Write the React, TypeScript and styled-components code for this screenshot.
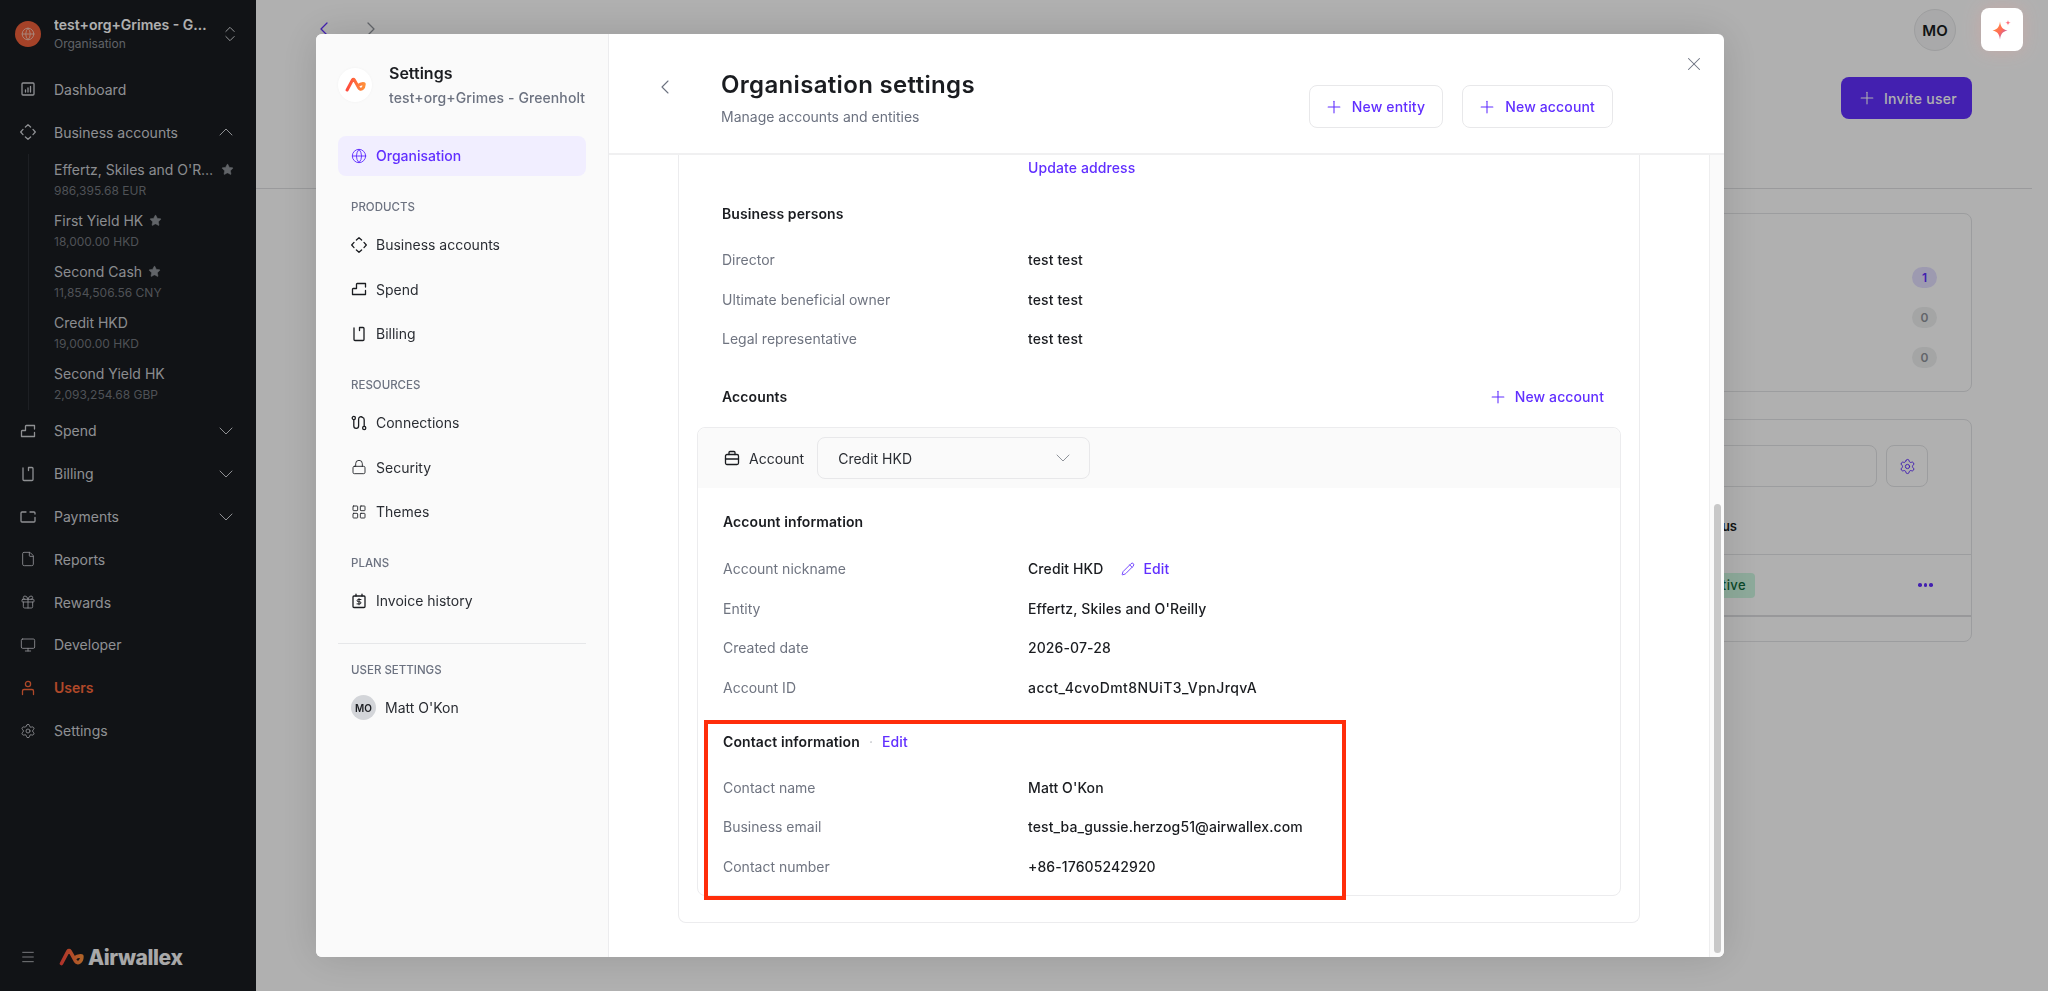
import React from 'react';
import styled, { createGlobalStyle } from 'styled-components';
import {
	ChevronDown,
	ChevronLeft,
	ChevronRight,
	ChevronUp,
	ChevronsUpDown,
	Gift,
	Globe,
	LayoutGrid,
	Lock,
	Menu,
	Monitor,
	Pencil,
	Plus,
	Settings as SettingsIcon,
	Star,
	X,
	File,
} from 'lucide-react';

const FONT = `Inter, 'Noto Sans', 'Liberation Sans', sans-serif`;
const PURPLE = '#612fff';

const GlobalStyle = createGlobalStyle`
	html, body {
		margin: 0;
		padding: 0;
		height: 100%;
		overflow: hidden;
		background: #fff;
		font-family: ${FONT};
	}
	* {
		box-sizing: border-box;
	}
`;

const Page = styled.div`
	display: flex;
	height: 100vh;
	overflow: hidden;
	background: #fff;
`;

/* ---------- sidebar ---------- */

const Sidebar = styled.aside`
	width: 256px;
	flex-shrink: 0;
	display: flex;
	flex-direction: column;
	background: #191c20;
	color: #ccced3;
	font-size: 14px;
`;

const OrgBlock = styled.div`
	height: 68px;
	display: flex;
	align-items: center;
	padding: 0 20px 0 15px;
`;

const OrgAvatar = styled.div`
	width: 26px;
	height: 26px;
	border-radius: 50%;
	background: #f0603a;
	color: #f6c9ba;
	display: flex;
	align-items: center;
	justify-content: center;
	flex-shrink: 0;
`;

const OrgText = styled.div`
	margin-left: 13px;
	width: 156px;
	flex-shrink: 0;
`;

const OrgName = styled.div`
	color: #fff;
	font-weight: 600;
	line-height: 18px;
	white-space: nowrap;
	overflow: hidden;
	text-overflow: ellipsis;
`;

const OrgSub = styled.div`
	color: #8b8f96;
	font-size: 12px;
	line-height: 18px;
	margin-top: 1px;
`;

const OrgSwitch = styled.div`
	margin-left: 10px;
	display: flex;
	color: #d6d8dc;
`;

const NavRow = styled.div<{ $active?: boolean }>`
	height: 42.8px;
	display: flex;
	align-items: center;
	padding: 0 18px 0 20px;
	gap: 18px;
	flex-shrink: 0;
	color: ${(p) => (p.$active ? '#ff6a3c' : '#cfd1d6')};
	font-weight: ${(p) => (p.$active ? 600 : 400)};

	svg {
		flex-shrink: 0;
	}
`;

const NavText = styled.span`
	flex: 1;
`;

const SubGroup = styled.div`
	margin: 0 0 0 28px;
	border-left: 1px solid #2b2e33;
	padding-left: 25px;
`;

const SubItem = styled.div`
	height: 51.2px;
	padding-top: 6px;
`;

const SubName = styled.div`
	display: flex;
	align-items: center;
	gap: 6px;
	line-height: 20px;
	color: #c9cbd0;

	svg {
		flex-shrink: 0;
		fill: #8d9197;
		color: #8d9197;
	}
`;

const SubLabel = styled.span<{ $wide?: boolean }>`
	white-space: nowrap;
	overflow: hidden;
	text-overflow: ellipsis;
	max-width: ${(p) => (p.$wide ? '161px' : 'none')};
`;

const SubAmount = styled.div`
	margin-top: 2px;
	font-size: 12px;
	line-height: 18px;
	color: #73777e;
`;

const SidebarFoot = styled.div`
	margin-top: auto;
	height: 68px;
	display: flex;
	align-items: center;
	padding-left: 20px;
	color: #c5c7cc;
`;

const Brand = styled.div`
	display: flex;
	align-items: center;
	margin-left: 23px;
	gap: 4px;
`;

const BrandText = styled.span`
	font-size: 21px;
	font-weight: 800;
	letter-spacing: -0.4px;
	color: #f4f4f5;
`;

/* ---------- page behind the dialog ---------- */

const Main = styled.main`
	flex: 1;
	display: flex;
	flex-direction: column;
	min-width: 0;
`;

const TopBar = styled.div`
	height: 60px;
	display: flex;
	align-items: center;
	padding: 0 92px 0 56px;
`;

const ArrowBack = styled.div`
	color: ${PURPLE};
	display: flex;
	margin-right: 23px;
	margin-top: -2px;
`;

const ArrowForward = styled.div`
	color: #8f939a;
	display: flex;
	margin-top: -2px;
`;

const UserBadge = styled.div`
	margin-left: auto;
	width: 42px;
	height: 42px;
	border-radius: 50%;
	border: 1px solid #e4e5e7;
	background: #f5f5f6;
	color: #191c20;
	font-weight: 600;
	font-size: 15px;
	display: flex;
	align-items: center;
	justify-content: center;
`;

const ActionBar = styled.div`
	display: flex;
	justify-content: flex-end;
	padding: 17px 76px 0 0;
`;

const InviteButton = styled.div`
	width: 131px;
	height: 42px;
	border-radius: 8px;
	background: ${PURPLE};
	color: #fff;
	font-size: 14px;
	font-weight: 500;
	letter-spacing: 0.3px;
	display: flex;
	align-items: center;
	gap: 7px;
	padding-left: 16px;
`;

const Divider = styled.div`
	height: 1px;
	margin: 69px 16px 0 0;
	background: #dfe0e2;
`;

const Cards = styled.div`
	display: flex;
	flex-direction: column;
	gap: 27px;
	padding: 24px 76px 0 100px;
`;

const Card = styled.section<{ $height: number }>`
	height: ${(p) => p.$height}px;
	border: 1px solid #e3e4e6;
	border-radius: 8px;
`;

const CountList = styled.div`
	display: flex;
	flex-direction: column;
	align-items: flex-end;
	gap: 19px;
	padding: 53px 34px 0 0;
`;

const Count = styled.div<{ $on?: boolean }>`
	width: 25px;
	height: 21px;
	border-radius: 11px;
	background: ${(p) => (p.$on ? '#e4dfff' : '#eeeff0')};
	color: ${(p) => (p.$on ? PURPLE : '#8f939a')};
	font-size: 12px;
	font-weight: 600;
	display: flex;
	align-items: center;
	justify-content: center;
`;

const Toolbar = styled.div`
	display: flex;
	justify-content: flex-end;
	gap: 9px;
	padding: 25px 43px 0 0;
`;

const SearchField = styled.div`
	width: 800px;
	height: 42px;
	border: 1px solid #e3e4e6;
	border-radius: 8px;
`;

const GearButton = styled.div`
	width: 42px;
	height: 42px;
	border: 1px solid #e3e4e6;
	border-radius: 8px;
	color: ${PURPLE};
	display: flex;
	align-items: center;
	justify-content: center;
`;

const TableHead = styled.div`
	height: 68px;
	display: flex;
	justify-content: flex-end;
	align-items: flex-end;
	padding: 0 234px 20px 0;
	border-bottom: 1px solid #e3e4e6;
	font-size: 13px;
	font-weight: 600;
	color: #191c20;
`;

const TableRow = styled.div`
	height: 62px;
	display: flex;
	justify-content: flex-end;
	align-items: center;
	gap: 163px;
	padding: 0 38px 0 0;
	border-bottom: 2px solid #dcdde0;
`;

const StatusPill = styled.div`
	height: 25px;
	border-radius: 4px;
	background: #cdf7e0;
	color: #0f6a3b;
	font-size: 13px;
	font-weight: 500;
	letter-spacing: 0.4px;
	line-height: 25px;
	padding: 0 9px 0 20px;
`;

const Dots = styled.div`
	display: flex;
	gap: 2px;
	width: 15px;
`;

const Dot = styled.i`
	width: 3.5px;
	height: 3.5px;
	border-radius: 50%;
	background: ${PURPLE};
`;

const Backdrop = styled.div`
	position: fixed;
	inset: 0;
	background: rgba(0, 0, 0, 0.31);
`;

const AiButton = styled.div`
	position: fixed;
	top: 8px;
	left: 1981px;
	width: 42px;
	height: 43px;
	border-radius: 8px;
	background: #fff;
	box-shadow: 0 0 18px rgba(255, 150, 140, 0.28);
	display: flex;
	align-items: center;
	justify-content: center;
`;

/* ---------- dialog ---------- */

const Dialog = styled.div`
	position: fixed;
	left: 316px;
	top: 34px;
	width: 1408px;
	height: 923px;
	display: flex;
	border-radius: 6px;
	overflow: hidden;
	background: #fff;
	box-shadow: 0 0 40px rgba(0, 0, 0, 0.14);
	color: #1a1c20;
	font-size: 14px;
`;

const SettingsPane = styled.div`
	width: 293px;
	flex-shrink: 0;
	background: #fafafa;
	border-right: 1px solid #ececee;
	padding: 28px 22px 0;
`;

const PaneHead = styled.div`
	display: flex;
	align-items: center;
	gap: 17px;
	margin-bottom: 27.5px;
`;

const LogoDisc = styled.div`
	width: 34px;
	height: 34px;
	border-radius: 50%;
	background: #fff;
	box-shadow: 0 0 3px rgba(0, 0, 0, 0.04);
	flex-shrink: 0;
	display: flex;
	align-items: center;
	justify-content: center;
`;

const PaneTitle = styled.div`
	font-size: 16px;
	font-weight: 600;
	line-height: 22px;
	margin-bottom: 4px;
`;

const PaneSub = styled.div`
	font-weight: 500;
	line-height: 20px;
	color: #6c7280;
	white-space: nowrap;
	letter-spacing: 0.1px;
`;

const MenuLabel = styled.div`
	margin: 23px 0 10px 13px;
	font-size: 11.5px;
	font-weight: 500;
	line-height: 16px;
	color: #6c7280;
	text-transform: uppercase;
`;

const MenuGroup = styled.div`
	display: flex;
	flex-direction: column;
	gap: 4.5px;
`;

const MenuItem = styled.div<{ $active?: boolean }>`
	height: 40px;
	display: flex;
	align-items: center;
	gap: 9px;
	padding-left: 13px;
	border-radius: 8px;
	background: ${(p) => (p.$active ? '#f1eeff' : 'transparent')};
	color: ${(p) => (p.$active ? PURPLE : '#2a2d33')};
	font-weight: ${(p) => (p.$active ? 500 : 400)};

	svg {
		flex-shrink: 0;
		color: ${(p) => (p.$active ? PURPLE : '#1a1c20')};
	}
`;

const PaneRule = styled.div`
	height: 1px;
	margin-top: 22px;
	background: #e6e7e9;
`;

const RuleLabel = styled(MenuLabel)`
	margin-top: 18px;
`;

const UserDisc = styled.div`
	width: 25px;
	height: 25px;
	border-radius: 50%;
	background: #d3d5d9;
	color: #1a1c20;
	font-size: 10px;
	font-weight: 600;
	display: flex;
	align-items: center;
	justify-content: center;
`;

const Detail = styled.div`
	flex: 1;
	min-width: 0;
	display: flex;
	flex-direction: column;
`;

const DetailHead = styled.header`
	position: relative;
	height: 121px;
	flex-shrink: 0;
	display: flex;
	border-bottom: 2px solid #f0f0f1;
	padding: 35px 111px 0 44px;
`;

const BackArrow = styled.div`
	color: #6c7280;
	display: flex;
	height: 24px;
	margin-top: 6px;
	margin-right: 44px;
`;

const HeadTitle = styled.h1`
	margin: 0;
	font-size: 24px;
	font-weight: 600;
	line-height: 32px;
	letter-spacing: 0.33px;
`;

const HeadSub = styled.div`
	margin-top: 6px;
	line-height: 20px;
	color: #6c7280;
`;

const HeadActions = styled.div`
	margin-left: auto;
	display: flex;
	gap: 19px;
	padding-top: 16px;
`;

const OutlineButton = styled.div`
	height: 43px;
	display: flex;
	align-items: center;
	gap: 8px;
	padding: 0 17px 0 14px;
	border: 1px solid #e8e8ea;
	border-radius: 8px;
	color: ${PURPLE};
	font-weight: 500;
	letter-spacing: 0.15px;
`;

const CloseButton = styled.div`
	position: absolute;
	top: 19px;
	right: 19px;
	display: flex;
	color: #6c7280;
`;

const DetailBody = styled.div`
	flex: 1;
	min-height: 0;
	display: flex;
`;

const ScrollArea = styled.div`
	flex: 1;
	min-width: 0;
	padding: 0 69px;
	overflow: hidden;
`;

const OuterCard = styled.div`
	height: 768px;
	border: 1px solid #ececee;
	border-top: none;
	border-radius: 0 0 8px 8px;
	padding: 3px 18px 27px 18px;
`;

const Indented = styled.div`
	padding-left: 25px;
`;

const AddressLink = styled.div`
	padding-left: 306px;
	line-height: 20px;
	color: ${PURPLE};
	font-weight: 500;
	letter-spacing: 0.1px;
`;

const SectionTitle = styled.div<{ $top?: number; $bottom?: number }>`
	margin-top: ${(p) => p.$top ?? 25}px;
	margin-bottom: ${(p) => p.$bottom ?? 17}px;
	line-height: 20px;
	font-weight: 600;
	display: flex;
	align-items: center;
	letter-spacing: 0.1px;
`;

const InfoRow = styled.div<{ $col?: number }>`
	display: grid;
	grid-template-columns: ${(p) => p.$col ?? 306}px 1fr;
	height: 39.4px;
	align-items: center;
`;

const InfoLabel = styled.div`
	color: #6f7480;
`;

const InfoValue = styled.div`
	font-weight: 500;
	display: flex;
	align-items: center;
	letter-spacing: 0.1px;
`;

const AccountIdValue = styled(InfoValue)`
	letter-spacing: 0.43px;
`;

const AccountsHead = styled(SectionTitle)`
	justify-content: space-between;
	padding-right: 17px;
`;

const TextLink = styled.span`
	display: inline-flex;
	align-items: center;
	gap: 7px;
	color: ${PURPLE};
	font-weight: 500;
	letter-spacing: 0.1px;
`;

const EditLink = styled(TextLink)`
	gap: 8px;
	margin-left: 18px;
`;

const AccountCard = styled.div`
	border: 1px solid #ececee;
	border-radius: 8px;
	overflow: visible;
	height: 469px;
`;

const AccountBar = styled.div`
	height: 60px;
	background: #fafafa;
	border-radius: 8px 8px 0 0;
	display: flex;
	align-items: center;
	padding-left: 26px;
	gap: 9px;
	color: #2a2d33;

	svg {
		color: #1a1c20;
	}
`;

const SelectBox = styled.div`
	width: 273px;
	height: 42px;
	margin-left: 4px;
	border: 1px solid #e8e8ea;
	border-radius: 8px;
	display: flex;
	align-items: center;
	justify-content: space-between;
	padding: 0 14px 0 20px;

	svg {
		color: #8f939a;
	}
`;

const AccountBody = styled.div`
	padding: 0 25px;
`;

const ContactSection = styled.div`
	position: relative;
	margin-top: 25px;
`;

const ContactTitle = styled(SectionTitle)`
	margin-top: 0;
	margin-bottom: 16px;
`;

const Sep = styled.span`
	margin: 0 9px 0 9px;
	color: #c4c6cb;
	font-weight: 400;
`;

const Annotation = styled.div`
	position: absolute;
	left: -19px;
	top: -12px;
	bottom: -14px;
	width: 642px;
	border: 4px solid #ff2d0a;
	pointer-events: none;
`;

const ScrollTrack = styled.div`
	width: 15px;
	flex-shrink: 0;
	background: #fafafa;
	border-left: 1px solid #eeeeef;
	padding: 349px 3px 0 4px;
`;

const ScrollThumb = styled.div`
	height: 449px;
	border-radius: 4px;
	background: #c8c8c8;
`;

/* ---------- drawn icons ---------- */

const Svg = ({ size = 16, children }: { size?: number; children: React.ReactNode }) => (
	<svg
		width={size}
		height={size}
		viewBox='0 0 16 16'
		fill='none'
		stroke='currentColor'
		strokeWidth={1.3}
		strokeLinecap='round'
		strokeLinejoin='round'
	>
		{children}
	</svg>
);

const DiamondIcon = () => (
	<Svg>
		<path d='M5.400 3 8 .7 10.600 3M13 5.400 15.300 8 13 10.600M10.600 13 8 15.300 5.400 13M3 10.600.7 8 3 5.400' />
	</Svg>
);

const SpendIcon = () => (
	<Svg>
		<path d='M1.500 13.500V8.200a.7.700 0 0 1 .7-.7H5.500V3.200a.7.700 0 0 1 .7-.7h8.300V6M14.500 9.500v4H1.500' />
	</Svg>
);

const BillingIcon = () => (
	<Svg>
		<path d='M3 2v11.500a1 1 0 0 0 1 1h8a1 1 0 0 0 1-1V2.500a1 1 0 0 0-1-1H8.500v3' />
	</Svg>
);

const PaymentsIcon = () => (
	<Svg>
		<path d='M6 3H2a1 1 0 0 0-1 1v8a1 1 0 0 0 1 1h12a1 1 0 0 0 1-1V8.500M10 3h4a1 1 0 0 1 1 1v1' />
	</Svg>
);

const UserIcon = () => (
	<Svg>
		<circle cx='8' cy='4' r='2.600' />
		<path d='M2.500 14.500V11a1.500 1.500 0 0 1 1.500-1.500h8a1.500 1.500 0 0 1 1.500 1.500v3.500' />
	</Svg>
);

const ConnectionsIcon = () => (
	<Svg>
		<circle cx='2.800' cy='3' r='1.600' />
		<circle cx='13.200' cy='13' r='1.600' />
		<path d='M2.800 4.600V11a2.400 2.400 0 0 0 4.800 0V4a2.400 2.400 0 0 1 4 -1.600M11.400 2.400a2.400 2.400 0 0 1 1.800 2.300v6.700' />
	</Svg>
);

const InvoiceIcon = () => (
	<Svg>
		<rect x='2' y='3' width='12' height='11.500' rx='1' />
		<path d='M5 1.200V3M11 1.200V3' />
		<path d='M10 6.500H7.200a1 1 0 0 0 0 2.200h1.600a1 1 0 0 1 0 2.200H6M8 5.600v6.200' strokeWidth={1} />
	</Svg>
);

const BriefcaseIcon = () => (
	<Svg>
		<rect x='1.500' y='4.500' width='13' height='10' rx='1.500' />
		<path d='M5 4.500V2.500a1 1 0 0 1 1-1h4a1 1 0 0 1 1 1v2M1.500 9h13' />
	</Svg>
);

const AirwallexMark = ({ size }: { size: number }) => (
	<svg width={size} height={(size * 18) / 25} viewBox='0 0 25 18' fill='none'>
		<defs>
			<linearGradient id={`ax-${size}`} x1='0' y1='0' x2='1' y2='0'>
				<stop offset='0' stopColor='#ff4b3e' />
				<stop offset='1' stopColor='#ff8f3a' />
			</linearGradient>
		</defs>
		<path
			d='M2.500 15.500 9 3.200C9.500 2.400 10.500 2.400 11 3.200L16.500 13C17.500 14.800 19 15 20.500 14 22.500 12.500 23 10 22.800 8 20 7.500 17.500 8.500 15 10.500'
			stroke={`url(#ax-${size})`}
			strokeWidth={3.6}
			strokeLinecap='round'
			strokeLinejoin='round'
		/>
	</svg>
);

const Sparkle = () => (
	<svg width='24' height='24' viewBox='0 0 24 24'>
		<defs>
			<linearGradient id='spark' x1='0' y1='0' x2='1' y2='1'>
				<stop offset='0' stopColor='#ff9a2e' />
				<stop offset='0.55' stopColor='#ff6a5a' />
				<stop offset='1' stopColor='#7a5cff' />
			</linearGradient>
		</defs>
		<path d='M10 3.500C10.800 9 12 11 17.500 12.500 12 14 10.800 16 10 21.500 9.200 16 8 14 2.500 12.500 8 11 9.200 9 10 3.500Z' fill='url(#spark)' />
		<path d='M18 2c.3 2 .8 2.500 2.800 2.800-2 .3-2.500.8-2.800 2.800-.3-2-.8-2.500-2.800-2.800 2-.3 2.500-.8 2.800-2.800Z' fill='#ff6f7d' />
	</svg>
);

const accounts = [
	{ name: "Effertz, Skiles and O'Reilly", amount: '986,395.68 EUR', starred: true, wide: true },
	{ name: 'First Yield HK', amount: '18,000.00 HKD', starred: true },
	{ name: 'Second Cash', amount: '11,854,506.56 CNY', starred: true },
	{ name: 'Credit HKD', amount: '19,000.00 HKD' },
	{ name: 'Second Yield HK', amount: '2,093,254.68 GBP' },
];

const S = 16;
const ST = 1.3;

export default function App() {
	return (
		<>
			<GlobalStyle />
			<Page>
				<Sidebar>
					<OrgBlock>
						<OrgAvatar>
							<Globe size={14} strokeWidth={1.5} />
						</OrgAvatar>
						<OrgText>
							<OrgName>test+org+Grimes - Greenholt</OrgName>
							<OrgSub>Organisation</OrgSub>
						</OrgText>
						<OrgSwitch>
							<ChevronsUpDown size={20} strokeWidth={1.2} />
						</OrgSwitch>
					</OrgBlock>
					<NavRow>
						<Svg>
							<rect x='2' y='2' width='12' height='12' rx='1' />
							<path d='M5.500 11V9M8 11V7M10.500 11V5.500' />
						</Svg>
						<NavText>Dashboard</NavText>
					</NavRow>
					<NavRow>
						<DiamondIcon />
						<NavText>Business accounts</NavText>
						<ChevronUp size={24} strokeWidth={1} />
					</NavRow>
					<SubGroup>
						{accounts.map((a) => (
							<SubItem key={a.name}>
								<SubName>
									<SubLabel $wide={a.wide}>{a.name}</SubLabel>
									{a.starred && <Star size={13} strokeWidth={1} />}
								</SubName>
								<SubAmount>{a.amount}</SubAmount>
							</SubItem>
						))}
					</SubGroup>
					<NavRow>
						<SpendIcon />
						<NavText>Spend</NavText>
						<ChevronDown size={24} strokeWidth={1} />
					</NavRow>
					<NavRow>
						<BillingIcon />
						<NavText>Billing</NavText>
						<ChevronDown size={24} strokeWidth={1} />
					</NavRow>
					<NavRow>
						<PaymentsIcon />
						<NavText>Payments</NavText>
						<ChevronDown size={24} strokeWidth={1} />
					</NavRow>
					<NavRow>
						<File size={S} strokeWidth={ST} />
						<NavText>Reports</NavText>
					</NavRow>
					<NavRow>
						<Gift size={S} strokeWidth={ST} />
						<NavText>Rewards</NavText>
					</NavRow>
					<NavRow>
						<Monitor size={S} strokeWidth={ST} />
						<NavText>Developer</NavText>
					</NavRow>
					<NavRow $active>
						<UserIcon />
						<NavText>Users</NavText>
					</NavRow>
					<NavRow>
						<SettingsIcon size={S} strokeWidth={ST} />
						<NavText>Settings</NavText>
					</NavRow>
					<SidebarFoot>
						<Menu size={S} strokeWidth={ST} />
						<Brand>
							<AirwallexMark size={25} />
							<BrandText>Airwallex</BrandText>
						</Brand>
					</SidebarFoot>
				</Sidebar>
				<Main>
					<TopBar>
						<ArrowBack>
							<ChevronLeft size={24} strokeWidth={1.3} />
						</ArrowBack>
						<ArrowForward>
							<ChevronRight size={24} strokeWidth={1.3} />
						</ArrowForward>
						<UserBadge>MO</UserBadge>
					</TopBar>
					<ActionBar>
						<InviteButton>
							<Plus size={20} strokeWidth={1.3} />
							Invite user
						</InviteButton>
					</ActionBar>
					<Divider />
					<Cards>
						<Card $height={179}>
							<CountList>
								<Count $on>1</Count>
								<Count>0</Count>
								<Count>0</Count>
							</CountList>
						</Card>
						<Card $height={223}>
							<Toolbar>
								<SearchField />
								<GearButton>
									<SettingsIcon size={17} strokeWidth={1.4} />
								</GearButton>
							</Toolbar>
							<TableHead>Status</TableHead>
							<TableRow>
								<StatusPill>Active</StatusPill>
								<Dots>
									<Dot />
									<Dot />
									<Dot />
								</Dots>
							</TableRow>
						</Card>
					</Cards>
				</Main>
				<Backdrop />
				<AiButton>
					<Sparkle />
				</AiButton>
				<Dialog>
					<SettingsPane>
						<PaneHead>
							<LogoDisc>
								<AirwallexMark size={21} />
							</LogoDisc>
							<div>
								<PaneTitle>Settings</PaneTitle>
								<PaneSub>test+org+Grimes - Greenholt</PaneSub>
							</div>
						</PaneHead>
						<MenuItem $active>
							<Globe size={S} strokeWidth={1.4} />
							Organisation
						</MenuItem>
						<MenuLabel>Products</MenuLabel>
						<MenuGroup>
							<MenuItem>
								<DiamondIcon />
								Business accounts
							</MenuItem>
							<MenuItem>
								<SpendIcon />
								Spend
							</MenuItem>
							<MenuItem>
								<BillingIcon />
								Billing
							</MenuItem>
						</MenuGroup>
						<MenuLabel>Resources</MenuLabel>
						<MenuGroup>
							<MenuItem>
								<ConnectionsIcon />
								Connections
							</MenuItem>
							<MenuItem>
								<Lock size={S} strokeWidth={ST} />
								Security
							</MenuItem>
							<MenuItem>
								<LayoutGrid size={S} strokeWidth={ST} />
								Themes
							</MenuItem>
						</MenuGroup>
						<MenuLabel>Plans</MenuLabel>
						<MenuItem>
							<InvoiceIcon />
							Invoice history
						</MenuItem>
						<PaneRule />
						<RuleLabel>User settings</RuleLabel>
						<MenuItem>
							<UserDisc>MO</UserDisc>
							Matt O'Kon
						</MenuItem>
					</SettingsPane>
					<Detail>
						<DetailHead>
							<BackArrow>
								<ChevronLeft size={24} strokeWidth={1.1} />
							</BackArrow>
							<div>
								<HeadTitle>Organisation settings</HeadTitle>
								<HeadSub>Manage accounts and entities</HeadSub>
							</div>
							<HeadActions>
								<OutlineButton>
									<Plus size={20} strokeWidth={1.3} />
									New entity
								</OutlineButton>
								<OutlineButton>
									<Plus size={20} strokeWidth={1.3} />
									New account
								</OutlineButton>
							</HeadActions>
							<CloseButton>
								<X size={22} strokeWidth={1.1} />
							</CloseButton>
						</DetailHead>
						<DetailBody>
							<ScrollArea>
								<OuterCard>
									<Indented>
										<AddressLink>Update address</AddressLink>
										<SectionTitle $top={26} $bottom={16}>
											Business persons
										</SectionTitle>
										<InfoRow>
											<InfoLabel>Director</InfoLabel>
											<InfoValue>test test</InfoValue>
										</InfoRow>
										<InfoRow>
											<InfoLabel>Ultimate beneficial owner</InfoLabel>
											<InfoValue>test test</InfoValue>
										</InfoRow>
										<InfoRow>
											<InfoLabel>Legal representative</InfoLabel>
											<InfoValue>test test</InfoValue>
										</InfoRow>
										<AccountsHead $top={29} $bottom={20}>
											Accounts
											<TextLink>
												<Plus size={20} strokeWidth={1.3} />
												New account
											</TextLink>
										</AccountsHead>
									</Indented>
									<AccountCard>
										<AccountBar>
											<BriefcaseIcon />
											Account
											<SelectBox>
												Credit HKD
												<ChevronDown size={24} strokeWidth={1} />
											</SelectBox>
										</AccountBar>
										<AccountBody>
											<SectionTitle $top={24}>Account information</SectionTitle>
											<InfoRow $col={305}>
												<InfoLabel>Account nickname</InfoLabel>
												<InfoValue>
													Credit HKD
													<EditLink>
														<Pencil size={14} strokeWidth={1.5} />
														Edit
													</EditLink>
												</InfoValue>
											</InfoRow>
											<InfoRow $col={305}>
												<InfoLabel>Entity</InfoLabel>
												<InfoValue>Effertz, Skiles and O'Reilly</InfoValue>
											</InfoRow>
											<InfoRow $col={305}>
												<InfoLabel>Created date</InfoLabel>
												<InfoValue>2026-07-28</InfoValue>
											</InfoRow>
											<InfoRow $col={305}>
												<InfoLabel>Account ID</InfoLabel>
												<AccountIdValue>acct_4cvoDmt8NUiT3_VpnJrqvA</AccountIdValue>
											</InfoRow>
											<ContactSection>
												<ContactTitle>
													Contact information
													<Sep>·</Sep>
													<TextLink>Edit</TextLink>
												</ContactTitle>
												<InfoRow $col={305}>
													<InfoLabel>Contact name</InfoLabel>
													<InfoValue>Matt O'Kon</InfoValue>
												</InfoRow>
												<InfoRow $col={305}>
													<InfoLabel>Business email</InfoLabel>
													<InfoValue>test_ba_gussie.herzog51@airwallex.com</InfoValue>
												</InfoRow>
												<InfoRow $col={305}>
													<InfoLabel>Contact number</InfoLabel>
													<InfoValue>+86-17605242920</InfoValue>
												</InfoRow>
												<Annotation />
											</ContactSection>
										</AccountBody>
									</AccountCard>
								</OuterCard>
							</ScrollArea>
							<ScrollTrack>
								<ScrollThumb />
							</ScrollTrack>
						</DetailBody>
					</Detail>
				</Dialog>
			</Page>
		</>
	);
}
